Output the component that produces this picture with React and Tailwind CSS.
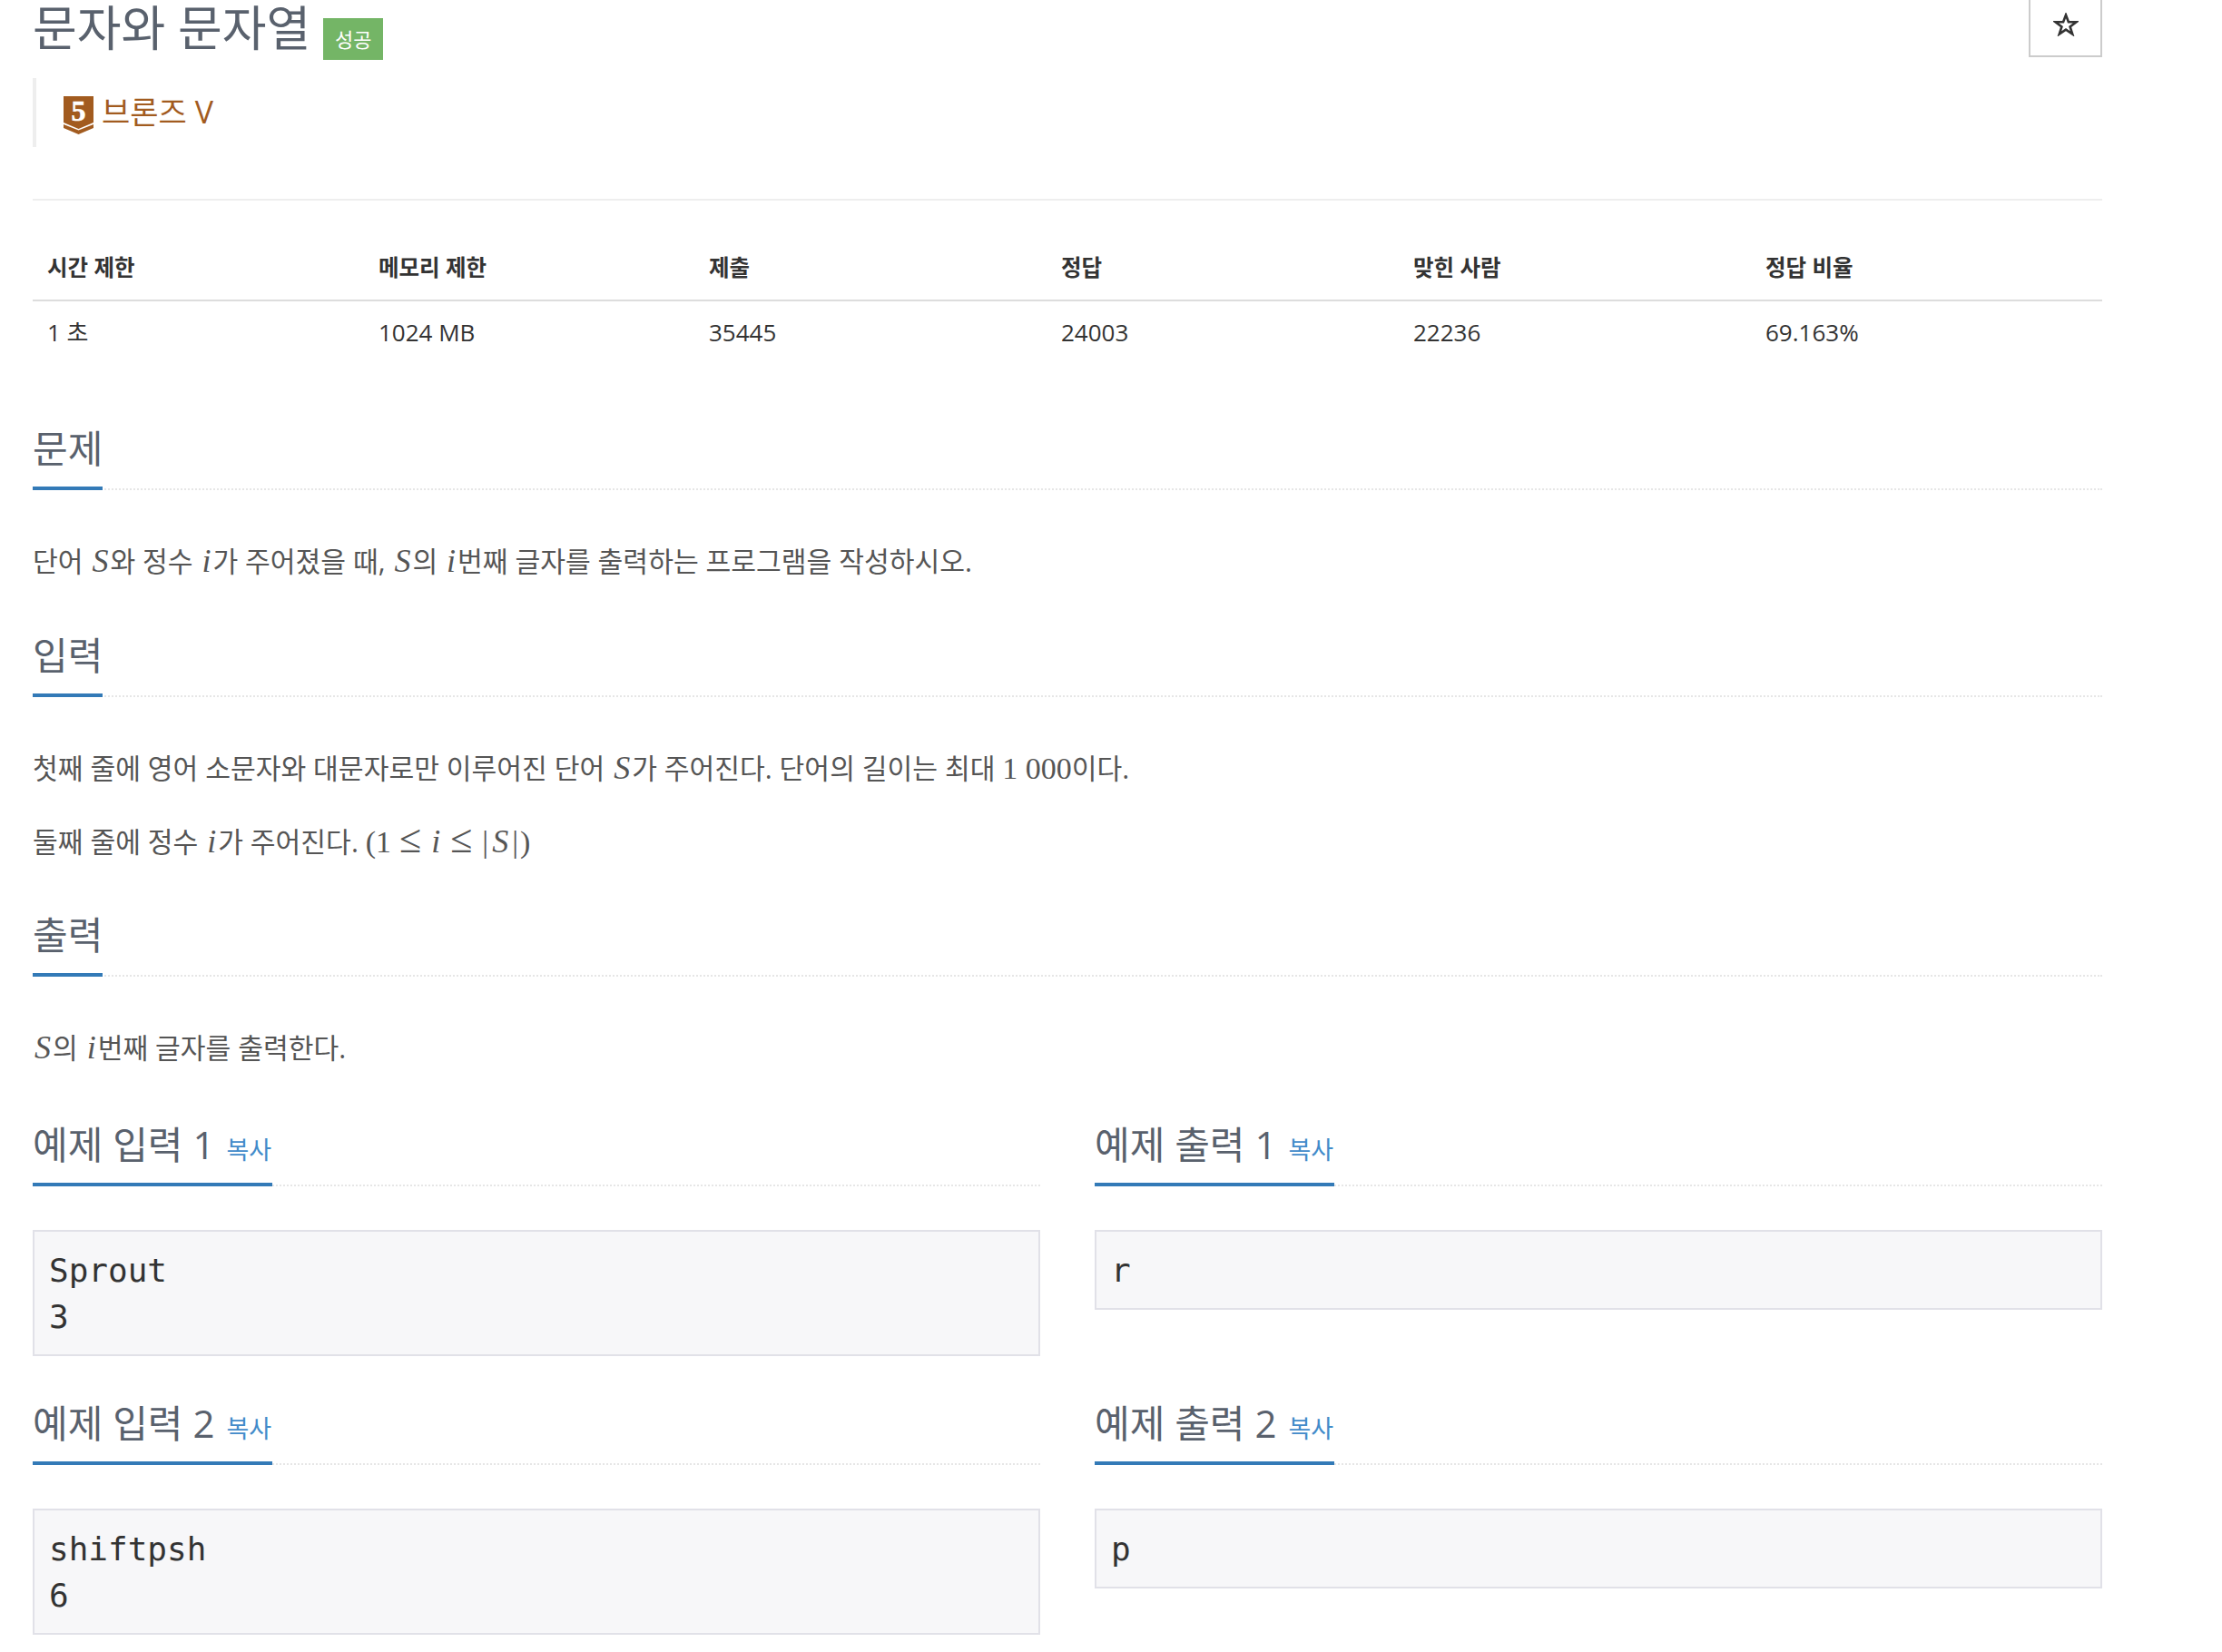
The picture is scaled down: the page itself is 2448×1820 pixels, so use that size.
import React from "react";

const sans = "font-['Open_Sans','Noto_Sans_CJK_KR',sans-serif]";

// Math pieces are set in a serif italic like the site's formula renderer
function V({ children }) {
  return <span className="px-[2px] font-['Liberation_Serif',serif] text-[36px] italic leading-none">{children}</span>;
}

function N({ children }) {
  return <span className="font-['Liberation_Serif',serif] text-[34px] leading-none">{children}</span>;
}

function Leq() {
  return <span className="mx-[9px] font-['Liberation_Serif',serif] text-[44px] leading-none">≤</span>;
}

function Bar() {
  return <span className="px-[2px] font-['Liberation_Serif',serif] text-[34px] leading-none">|</span>;
}

function Headline({ children, copy }) {
  return (
    <div className="border-b-2 border-dotted border-[#e6e6e6]">
      <div className="-mb-[2px] inline-block border-b-4 border-[#337ab7] pb-[14px] text-[42px] leading-[57px] text-[#59616d]">
        {children}
        {copy && <span className="ml-[13px] pr-[1px] text-[27px] leading-none text-[#428bca]">복사</span>}
      </div>
    </div>
  );
}

function Pre({ lines }) {
  return (
    <pre className="mt-[48px] border-2 border-[#e1e1e8] bg-[#f7f7f9] px-[16px] py-[16.5px] font-['DejaVu_Sans_Mono',monospace] text-[36px] leading-[51px] text-[#333333]">
      {lines.join("\n")}
    </pre>
  );
}

function Sample({ title, lines }) {
  return (
    <div>
      <Headline copy>{title}</Headline>
      <Pre lines={lines} />
    </div>
  );
}

function Tier() {
  return (
    <svg width="33" height="42" viewBox="0 0 33 42" className="shrink-0">
      <path d="M0 0H33V29L16.5 36L0 29Z" fill="#a25b1f" />
      <path d="M0 31L16.5 37.5L33 31V35L16.5 42L0 35Z" fill="#a25b1f" />
      <text
        x="16.5"
        y="27"
        textAnchor="middle"
        fontSize="32"
        fontWeight="700"
        fontFamily="Liberation Serif, serif"
        fill="#ffffff"
        stroke="#ffffff"
        strokeWidth="0.6"
      >
        5
      </text>
    </svg>
  );
}

function Star() {
  return (
    <svg width="28" height="26" viewBox="0 0 28 26" className="mb-[7px]">
      <path
        d="M14 2.5L16.9 10.3H25.5L18.6 15.4L21.2 23.5L14 18.6L6.8 23.5L9.4 15.4L2.5 10.3H11.1Z"
        fill="none"
        stroke="#333333"
        strokeWidth="2.6"
      />
    </svg>
  );
}

const columns = [
  { label: "시간 제한", value: "1 초", width: "w-[365px]" },
  { label: "메모리 제한", value: "1024 MB", width: "w-[364px]" },
  { label: "제출", value: "35445", width: "w-[388px]" },
  { label: "정답", value: "24003", width: "w-[388px]" },
  { label: "맞힌 사람", value: "22236", width: "w-[388px]" },
  { label: "정답 비율", value: "69.163%", width: "w-[387px]" },
];

export default function App() {
  return (
    <div className={`${sans} w-[2316px] bg-white pl-[36px] text-[#555555]`}>
      {/* title row */}
      <div className="flex items-start justify-between">
        <div className="flex items-start">
          <h1 className="text-[53px] leading-[62px] text-[#59616d]">문자와 문자열</h1>
          <span className="ml-[14px] mt-[20px] flex h-[46px] w-[66px] items-center justify-center bg-[#74b566] text-[22px] text-white">
            성공
          </span>
        </div>
        <button className="flex h-[63px] w-[81px] items-center justify-center border-2 border-t-0 border-[#cccccc]">
          <Star />
        </button>
      </div>

      <div className="mt-[20px] flex h-[76px] items-start gap-[9px] border-l-4 border-[#eeeeee] pl-[30px] pt-[20px]">
        <Tier />
        <span className="-mt-[3px] text-[34px] leading-[40px] text-[#a25b1f]">브론즈 V</span>
      </div>

      <div className="mt-[57px] h-[2px] bg-[#eeeeee]" />

      {/* problem info */}
      <table className="mt-[40px] w-full table-fixed border-collapse text-[26px] text-[#333333]">
        <thead>
          <tr className="border-b-2 border-[#dddddd]">
            {columns.map((col) => (
              <th key={col.label} className={`${col.width} h-[70px] px-[16px] text-left text-[24.5px] font-bold`}>
                {col.label}
              </th>
            ))}
          </tr>
        </thead>
        <tbody>
          <tr>
            {columns.map((col) => (
              <td key={col.label} className="h-[70px] px-[16px]">
                {col.value}
              </td>
            ))}
          </tr>
        </tbody>
      </table>

      <section className="mt-[64px]">
        <Headline>문제</Headline>
        <p className="mt-[56px] text-[30.2px] leading-[46px]">
          단어 <V>S</V>와 정수 <V>i</V>가 주어졌을 때, <V>S</V>의 <V>i</V>번째 글자를 출력하는 프로그램을 작성하시오.
        </p>
      </section>

      <section className="mt-[51px]">
        <Headline>입력</Headline>
        <p className="mt-[56px] text-[30.2px] leading-[46px]">
          첫째 줄에 영어 소문자와 대문자로만 이루어진 단어 <V>S</V>가 주어진다. 단어의 길이는 최대 <N>1 000</N>이다.
        </p>
        <p className="mt-[33px] text-[30.2px] leading-[46px]">
          둘째 줄에 정수 <V>i</V>가 주어진다. <N>(1</N><Leq /><V>i</V><Leq /><Bar /><V>S</V><Bar /><N>)</N>
        </p>
      </section>

      <section className="mt-[50px]">
        <Headline>출력</Headline>
        <p className="mt-[56px] text-[30.2px] leading-[46px]">
          <V>S</V>의 <V>i</V>번째 글자를 출력한다.
        </p>
      </section>

      {/* samples */}
      <div className="mt-[54px] grid grid-cols-2 gap-x-[60px] gap-y-[45px]">
        <Sample title="예제 입력 1" lines={["Sprout", "3"]} />
        <Sample title="예제 출력 1" lines={["r"]} />
        <Sample title="예제 입력 2" lines={["shiftpsh", "6"]} />
        <Sample title="예제 출력 2" lines={["p"]} />
      </div>
    </div>
  );
}
